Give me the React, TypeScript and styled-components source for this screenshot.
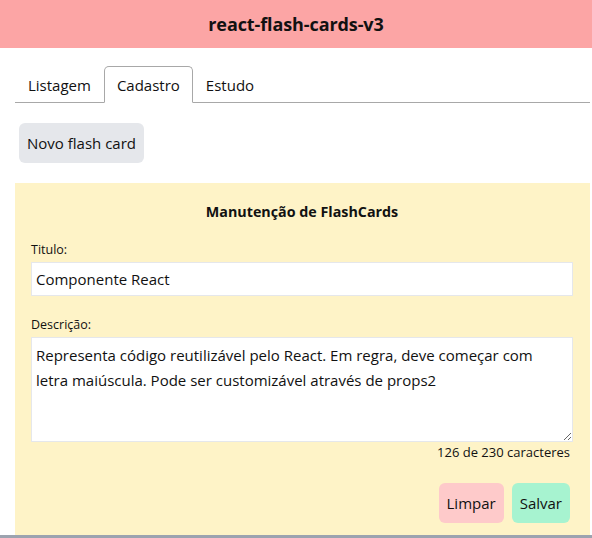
import React, { useState } from "react";
import styled, { createGlobalStyle } from "styled-components";

const Global = createGlobalStyle`
  html, body { margin: 0; padding: 0; background: #ffffff; }
  body { font-family: "Open Sans", "Noto Sans", sans-serif; color: #111111; }
  * { box-sizing: border-box; }
`;

const Page = styled.div`
  width: 592px;
  height: 538px;
  overflow: hidden;
  display: flex;
  flex-direction: column;
  border-bottom: 3px solid #9ca3af;
`;

const Header = styled.header`
  height: 48px;
  flex: none;
  background: #fca5a5;
  display: flex;
  align-items: center;
  justify-content: center;
`;

const Title = styled.h1`
  margin: 0;
  font-size: 18px;
  font-weight: 700;
  letter-spacing: -0.1px;
`;

const Main = styled.main`
  padding: 18px 2px 0 15px;
  display: flex;
  flex-direction: column;
  flex: 1;
  min-height: 0;
`;

const TabList = styled.div`
  display: flex;
  align-items: flex-end;
  border-bottom: 1px solid #a8a8a8;
  height: 37px;
`;

const Tab = styled.button<{ $active?: boolean }>`
  font: inherit;
  font-size: 15px;
  color: #111;
  background: ${(p) => (p.$active ? "#fff" : "transparent")};
  padding: 0 12px;
  height: ${(p) => (p.$active ? "37px" : "36px")};
  margin-bottom: ${(p) => (p.$active ? "-1px" : "0")};
  border: 1px solid ${(p) => (p.$active ? "#a8a8a8" : "transparent")};
  border-bottom: ${(p) => (p.$active ? "1px solid #fff" : "none")};
  border-radius: 5px 5px 0 0;
  cursor: pointer;
`;

const NewButton = styled.button`
  align-self: flex-start;
  margin: 20px 0 0 4px;
  height: 40px;
  padding: 0 8px;
  font: inherit;
  font-size: 15px;
  color: #111;
  background: #e5e7eb;
  border: none;
  border-radius: 6px;
`;

const Panel = styled.section`
  margin-top: 20px;
  background: #fef3c7;
  padding: 18px 17px 0 16px;
  flex: 1;
  display: flex;
  flex-direction: column;
`;

const PanelTitle = styled.h2`
  margin: 0 0 18px;
  text-align: center;
  font-size: 14.3px;
  font-weight: 700;
  line-height: 22px;
`;

const Label = styled.label`
  font-size: 12.5px;
  line-height: 18px;
  display: block;
  margin-bottom: 3px;
`;

const Input = styled.input`
  width: 100%;
  height: 34px;
  border: 1px solid #e5e7eb;
  background: #fff;
  padding: 0 4px;
  font: inherit;
  font-size: 15px;
  color: #111;
  outline: none;
  margin-bottom: 20px;
`;

const TextArea = styled.textarea`
  width: 100%;
  height: 105px;
  border: 1px solid #e5e7eb;
  background: #fff;
  padding: 5px 4px;
  font: inherit;
  font-size: 15px;
  line-height: 25px;
  color: #111;
  outline: none;
  resize: vertical;
  display: block;
`;

const Counter = styled.div`
  text-align: right;
  font-size: 13px;
  line-height: 20px;
  padding-right: 3px;
`;

const Actions = styled.div`
  display: flex;
  justify-content: flex-end;
  gap: 8px;
  margin-top: 21px;
  padding-right: 3px;
`;

const ActionButton = styled.button<{ $tone: "red" | "green" }>`
  height: 40px;
  padding: 0 8px;
  border: none;
  border-radius: 6px;
  font: inherit;
  font-size: 15px;
  color: #111;
  background: ${(p) => (p.$tone === "red" ? "#fecaca" : "#a7f3d0")};
`;

export default function App() {
  const [title, setTitle] = useState("Componente React");
  const [desc, setDesc] = useState(
    "Representa código reutilizável pelo React. Em regra, deve começar com letra maiúscula. Pode ser customizável através de props2"
  );
  return (
    <Page>
      <Global />
      <Header>
        <Title>react-flash-cards-v3</Title>
      </Header>
      <Main>
        <TabList>
          <Tab>Listagem</Tab>
          <Tab $active>Cadastro</Tab>
          <Tab>Estudo</Tab>
        </TabList>
        <NewButton>Novo flash card</NewButton>
        <Panel>
          <PanelTitle>Manutenção de FlashCards</PanelTitle>
          <Label htmlFor="titulo">Titulo:</Label>
          <Input id="titulo" value={title} onChange={(e) => setTitle(e.target.value)} />
          <Label htmlFor="descricao">Descrição:</Label>
          <TextArea id="descricao" value={desc} onChange={(e) => setDesc(e.target.value)} />
          <Counter>{desc.length} de 230 caracteres</Counter>
          <Actions>
            <ActionButton $tone="red">Limpar</ActionButton>
            <ActionButton $tone="green">Salvar</ActionButton>
          </Actions>
        </Panel>
      </Main>
    </Page>
  );
}
